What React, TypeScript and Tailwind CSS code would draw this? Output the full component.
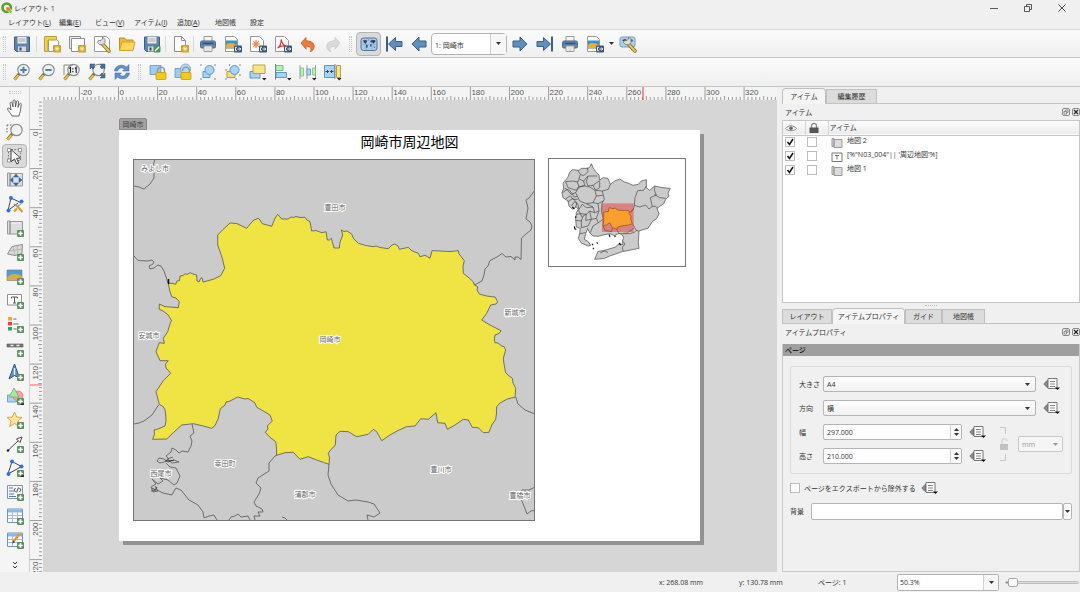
import React from 'react';

type IconProps = { children: React.ReactNode; className?: string };

const Svg = ({ children, className = 'h-[18px] w-[18px]' }: IconProps) => (
  <svg viewBox="0 0 18 18" className={className} fill="none" aria-hidden="true">
    {children}
  </svg>
);

const PlusBadge = () => (
  <g>
    <rect x="11" y="11" width="7" height="7" rx="1" fill="#5a8f5f" />
    <path d="M14.5 12.2v4.6M12.2 14.5h4.6" stroke="#fff" strokeWidth="1.6" />
  </g>
);

const StarBadge = () => (
  <g>
    <rect x="10" y="10" width="8" height="7.500" rx="1" fill="#c9a42f" />
    <path d="M14 11.300v5M11.500 13.800h5M12.300 12.100l3.400 3.400M15.700 12.100l-3.400 3.400" stroke="#fff3b0" strokeWidth=".9" />
  </g>
);

const ExportBadge = () => (
  <g>
    <rect x="10" y="10.500" width="8" height="7" rx="1" fill="#3d566e" />
    <path d="M13 12.300h-1.500v3.400H13M13.500 14h3M15.300 12.500l1.500 1.500-1.500 1.500" stroke="#fff" strokeWidth=".9" />
  </g>
);

const Sheet = () => <path d="M3.500 1.500h7l4 4v11h-11zM10.500 1.500v4h4" fill="#fdfdfd" stroke="#8d8d8d" />;

const Floppy = () => (
  <g>
    <path d="M1.500 2h15v14.500h-13l-2-2z" fill="#5c85ad" stroke="#3f5f80" />
    <path d="M4.500 2h9v6.500h-9z" fill="#ececec" />
    <path d="M5.500 4h7M5.500 6h7" stroke="#a9a9a9" />
    <path d="M5 11.500h8v5H5z" fill="#d8d8d8" />
    <path d="M6.500 12.500h2v3h-2z" fill="#334c66" />
  </g>
);

const Printer = () => (
  <g>
    <path d="M5 1.500h8v5H5z" fill="#f5f5f5" stroke="#9a9a9a" />
    <rect x="1.500" y="6" width="15" height="7" rx="1.500" fill="#5f87b0" stroke="#46688c" />
    <path d="M3.500 8.500h11" stroke="#34506d" strokeWidth="1.500" />
    <path d="M5 11h8v5.500H5z" fill="#fafafa" stroke="#9a9a9a" />
    <path d="M6.500 13h5M6.500 15h5" stroke="#bbb" strokeWidth=".8" />
  </g>
);

const ImageSheet = () => (
  <g>
    <path d="M1.500 1.500h9l3 3v12h-12z" fill="#fdfdfd" stroke="#999" />
    <path d="M2 5.500h11v8H2z" fill="#3d8fd1" />
    <path d="M2 10c3-3 7-2 11 0v3.500H2z" fill="#dfb043" />
    <ExportBadge />
  </g>
);

const Lens = () => (
  <g>
    <path d="M6.500 10.500l-5 6" stroke="#6b5a2a" strokeWidth="3" />
    <path d="M5.500 12l-4 4.500" stroke="#eec13e" strokeWidth="2" />
    <circle cx="10.500" cy="7" r="5.700" fill="#f0f3f5" stroke="#8c9093" strokeWidth="1.200" />
  </g>
);

const Wrench = () => (
  <g>
    <path d="M9.500 9l6.500 7" stroke="#6d5d22" strokeWidth="3.400" strokeLinecap="round" />
    <path d="M10 9.500l6 6.500" stroke="#f0cd48" strokeWidth="2" strokeLinecap="round" />
    <path d="M5.500 5.500l2.500 0 1.500-1.500 0-2 2.500 2.500 0 3-2.500 2.500-3-.500-2-2z" fill="#ddd" stroke="#666" strokeWidth=".7" />
  </g>
);

const World = () => (
  <g>
    <rect x="1" y="3" width="16" height="12.500" rx="2.500" fill="#a9c9ea" stroke="#4b76a5" />
    <path
      d="M3 5.500l2.500-.5 2 .8-1.200 1.700-.8 1.500-1.500-1.500zM6 9.500l1.800 1-.8 3-1-1.500zM8 5l1.200-.5v1zM10.300 6l1.500-1 3 .3 1 1-1.300 1-.5 1.500-1.200-.8-.6-.8-1.500.3zM10 9l1.800.3-.6 2.700-.9-1zM13.500 11.500l1.500.3-.5 1.200z"
      fill="#28394b"
    />
    <path d="M1 9.500h16M6 3v12M12 3v12" stroke="#6f9ac7" strokeWidth=".4" />
  </g>
);

const ArrowShape = ({ d }: { d: string }) => <path d={d} fill="#5f8fc1" stroke="#3b5f86" strokeLinejoin="round" />;
const leftArrow = 'M2 9l7-7v4h7v6H9v4z';
const rightArrow = 'M16 9L9 2v4H2v6h7v4z';

const Corner = () => <path d="M13 15h4.500l-2.250 2.500z" fill="#222" />;

const MapSheet = () => (
  <g>
    <path d="M1.500 2h2.500v13H1.500zM4 2.500h12.500V15H4z" fill="#dedede" stroke="#8f8f8f" strokeWidth=".9" />
    <path d="M5.500 4h9.500" stroke="#f2f2f2" />
  </g>
);

const icons: Record<string, React.ReactNode> = {
  save: <Floppy />,
  newLayout: (
    <g>
      <path d="M5.500 3.500h7l3 3v10h-10z" fill="#fdfdfd" stroke="#999" />
      <path d="M1.500 1.500h12V5H5v11.500H1.500z" fill="#f1cf5b" stroke="#c29d34" />
      <StarBadge />
    </g>
  ),
  duplicate: (
    <g>
      <path d="M1.500 1.500h11v12h-11z" fill="#ededed" stroke="#8d8d8d" />
      <path d="M3.500 3.500h13v13h-13z" fill="#fdfdfd" stroke="#8d8d8d" />
      <StarBadge />
    </g>
  ),
  manager: (
    <g>
      <path d="M1.500 1.500h12l3 3v12h-15z" fill="#fdfdfd" stroke="#999" />
      <Wrench />
    </g>
  ),
  open: (
    <g>
      <path d="M1.500 15V3h5l1.500 2h7v3" fill="#e9b93b" stroke="#c08f1e" />
      <path d="M1.500 15.500L4 7h13l-2 8.500z" fill="#fbd55e" stroke="#d3a22c" />
    </g>
  ),
  saveAs: (
    <g>
      <Floppy />
      <rect x="10.500" y="10.500" width="7" height="7" rx="1.500" fill="#4d9455" />
      <path d="M12 16l4-4" stroke="#fff" strokeWidth="1.400" />
    </g>
  ),
  addPage: (
    <g>
      <Sheet />
      <StarBadge />
    </g>
  ),
  print: <Printer />,
  image: <ImageSheet />,
  svg: (
    <g>
      <path d="M1.500 1.500h9l4 4v11h-13z" fill="#fdfdfd" stroke="#999" />
      <path d="M7 5v8M3 9h8M4.200 6.200l5.600 5.600M9.800 6.200l-5.600 5.600" stroke="#ef8246" strokeWidth="1.200" />
      <ExportBadge />
    </g>
  ),
  pdf: (
    <g>
      <path d="M1.500 1.500h9l4 4v11h-13z" fill="#fdfdfd" stroke="#999" />
      <path d="M3.500 13c3-2 4-5 3.500-8.500 1 4 2.500 6 5 6.500-3-.500-6 .2-8.500 2z" stroke="#dd3b35" strokeWidth="1.200" />
      <ExportBadge />
    </g>
  ),
  undo: <path d="M2 8l5-5.500v3.300c6 0 9 3 8 7-.5 2-2 3.200-4 4 2-3 1-5.600-4-5.600v3z" fill="#ee7b3b" stroke="#cc5a1e" strokeWidth=".8" />,
  redo: <path d="M16 8l-5-5.500v3.300c-6 0-9 3-8 7 .5 2 2 3.200 4 4-2-3-1-5.600 4-5.600v3z" fill="#dadada" stroke="#c9c9c9" strokeWidth=".8" />,
  world: <World />,
  first: (
    <g>
      <path d="M2 1.500v15" stroke="#3b5f86" strokeWidth="2" />
      <ArrowShape d="M3.500 9l7-6.500v4H17v5h-6.500v4z" />
    </g>
  ),
  prev: <ArrowShape d={leftArrow} />,
  next: <ArrowShape d={rightArrow} />,
  last: (
    <g>
      <path d="M16 1.500v15" stroke="#3b5f86" strokeWidth="2" />
      <ArrowShape d="M14.500 9l-7-6.500v4H1v5h6.500v4z" />
    </g>
  ),
  atlasSettings: (
    <g>
      <rect x="1" y="2" width="15" height="10" rx="2" fill="#b4cfea" stroke="#7a9cc0" />
      <path d="M3 5l3-1 2 1-1.500 3zM11 4l3 1-1 2z" fill="#33485f" />
      <Wrench />
    </g>
  ),
  zoomIn: (
    <g>
      <Lens />
      <path d="M10.500 3.800v6.400M7.300 7h6.400" stroke="#4f80b5" strokeWidth="2" />
    </g>
  ),
  zoomOut: (
    <g>
      <Lens />
      <path d="M7.300 7h6.400" stroke="#4f80b5" strokeWidth="2" />
    </g>
  ),
  zoomActual: (
    <g>
      <Lens />
      <path d="M1 2h9M1 2v10" stroke="#888" />
      <path d="M6.300 5.500l1.200-1v5.500M12 5.500l1.200-1v5.500" stroke="#222" strokeWidth="1.100" />
      <path d="M9.800 5.300v1.200M9.800 8v1.200" stroke="#222" strokeWidth="1.200" />
    </g>
  ),
  zoomFull: (
    <g>
      <Lens />
      <path
        d="M2 1h5L5.500 2.500 7 4 5 6 3.500 4.500 2 6zM17 1h-5l1.500 1.500L12 4l2 2 1.500-1.500L17 6zM17 15h-5l1.500-1.500L12 12l2-2 1.500 1.500L17 10z"
        fill="#45719f"
        stroke="#2f547a"
        strokeWidth=".5"
      />
    </g>
  ),
  refresh: (
    <g fill="#5e93c9" stroke="#39689b" strokeWidth=".5">
      <path d="M1.500 8C2 2 9.500.500 13.500 4L16 1.500V8H9.500L11.500 6C8.500 4 5.500 5 4.700 8z" />
      <path d="M16.500 10c-.5 6-8 7.500-12 4L2 16.500V10h6.500l-2 2c3 2 6 1 6.800-2z" />
    </g>
  ),
  lock: (
    <g>
      <path d="M1 2.500h11v9H1z" fill="#9ecbee" stroke="#5f96c3" strokeWidth=".8" />
      <path d="M8.500 10V8c0-5 7-5 7 0v2" stroke="#9a9a9a" strokeWidth="1.600" />
      <rect x="7" y="9.500" width="10" height="7" rx="1" fill="#f4cb14" stroke="#bf9c15" strokeWidth=".8" />
    </g>
  ),
  unlock: (
    <g>
      <path d="M1 5.500h11v9H1z" fill="#9ecbee" stroke="#5f96c3" strokeWidth=".8" />
      <circle cx="11.500" cy="6" r="5" fill="#b6d9f5" stroke="#6ea2cc" strokeWidth=".8" />
      <path d="M8.500 8c0-5 7-5 7 0v2" stroke="#9a9a9a" strokeWidth="1.500" />
      <rect x="7" y="9.500" width="10" height="7" rx="1" fill="#f4cb14" stroke="#bf9c15" strokeWidth=".8" />
    </g>
  ),
  group: (
    <g>
      <path d="M4 8.500h7v6H4z" fill="#a9d4f5" stroke="#5f96c3" />
      <circle cx="10.500" cy="7" r="4.500" fill="#a9d4f5" stroke="#5f96c3" />
      <path d="M1.500 2h1M15.500 2h1M1.500 16h1M15.500 16h1" stroke="#222" strokeWidth="1.200" />
    </g>
  ),
  ungroup: (
    <g>
      <path d="M3 8.500h8v6H3z" fill="#f5e07a" stroke="#b99e32" />
      <circle cx="10.500" cy="7" r="4.500" fill="#a9d4f5" stroke="#5f96c3" />
      <path d="M1.500 7h1M5 2h1M15.500 2h1M1.500 16h1M11.500 16h1M15.500 12h1" stroke="#222" strokeWidth="1.200" />
    </g>
  ),
  raise: (
    <g>
      <path d="M1 8.500h10v6.500H1z" fill="#a9d4f5" stroke="#5f96c3" />
      <path d="M4 2h12v8.500H4z" fill="#f5e68c" stroke="#b5a34a" />
      <Corner />
    </g>
  ),
  align: (
    <g>
      <path d="M1.500 1v15.500" stroke="#777" />
      <path d="M2 2.500h7v5H2z" fill="#b9efb9" stroke="#7cbf7c" />
      <path d="M2 9.500h10.500v5H2z" fill="#a9d4f5" stroke="#5f96c3" />
      <Corner />
    </g>
  ),
  distribute: (
    <g>
      <path d="M1 2v14M8 2v14M16.500 2v14" stroke="#888" strokeWidth=".8" />
      <path d="M1.500 5h3v8h-3zM13.500 5h3v7h-3z" fill="#b9efb9" stroke="#7cbf7c" strokeWidth=".8" />
      <path d="M8 6h3.500v6H8z" fill="#a9d4f5" stroke="#5f96c3" strokeWidth=".8" />
      <Corner />
    </g>
  ),
  resize: (
    <g>
      <path d="M.5 2.500h10v12H.5z" fill="#a9d4f5" stroke="#5f96c3" />
      <path d="M11 1v15" stroke="#888" />
      <path d="M12.500 2.500h4v12h-4z" fill="#f5e68c" stroke="#b5a34a" />
      <path d="M1.500 8.500h3M3 7l1.500 1.500L3 10M9.500 8.500h-3M8 7L6.500 8.500 8 10" stroke="#333" strokeWidth=".9" />
      <Corner />
    </g>
  ),
  pan: (
    <path
      d="M6 17c-1-3-4.500-5-4.500-7.500C2.500 8.500 4 9.500 5 11L4 4c.5-1.500 2-1 2.200.3L7 8V2c.5-1.500 2-1.500 2.200 0L9.500 8l1-5.500c.6-1.200 2-.8 2 .5L12 8.500l1.500-3.700c.8-1 2-.4 1.700.8C14.500 9 15 12 13.500 14.500L13 17z"
      fill="#fff"
      stroke="#555"
      strokeWidth=".9"
    />
  ),
  zoomArea: (
    <g>
      <path d="M1 2h9M1 2v9" stroke="#666" strokeDasharray="1.500 1.500" />
      <Lens />
    </g>
  ),
  select: (
    <g>
      <path d="M2.500 2.500h12v11h-12z" stroke="#777" strokeDasharray="1.500 1.500" />
      <path d="M1.500 1.500h3v3h-3zM12.500 1.500h3v3h-3zM1.500 12h3v3h-3z" fill="#fff" stroke="#777" strokeWidth=".7" />
      <path d="M5 2.500l9.500 8.500-4 .300 2.300 4.700-2 1-2.300-5L5 14.700z" fill="#fff" stroke="#333" strokeWidth=".9" />
    </g>
  ),
  moveContent: (
    <g>
      <MapSheet />
      <path d="M10 3l2.500 3h-5zM10 15l2.500-3h-5zM4 9l3-2.500v5zM16 9l-3-2.500v5z" fill="#2f67a5" stroke="#2f67a5" strokeWidth=".5" />
    </g>
  ),
  editNodes: (
    <g>
      <path d="M5 3l9.500 4.500M5 3L2 15.500M2 15.500L12 8" stroke="#444" />
      <circle cx="5" cy="3" r="2" fill="#2f6fe0" />
      <circle cx="15.500" cy="6.500" r="2" fill="#2f6fe0" />
      <circle cx="2.500" cy="15.500" r="2" fill="#2f6fe0" />
      <path d="M8 16.500l3-3M11 11l5.500 6" stroke="#dd9d23" strokeWidth="2.200" />
      <path d="M8 9l3 2.500 4-2.500" stroke="#999" strokeWidth="1.400" />
    </g>
  ),
  addMap: (
    <g>
      <MapSheet />
      <PlusBadge />
    </g>
  ),
  add3d: (
    <g>
      <path d="M1.500 11L6 3.500l10.500-2-.500 9-7 2z" fill="#d9d9d9" stroke="#8b8b8b" />
      <path d="M4 8l12-2M7 4l2 8M11 3l1 8" stroke="#aaa" strokeWidth=".7" />
      <PlusBadge />
    </g>
  ),
  addPicture: (
    <g>
      <path d="M1 3h15v10.500H1z" fill="#4b9ddb" stroke="#777" strokeWidth=".6" />
      <path d="M1.300 10c4-3.500 8-4 14.500-1v4.300H1.300z" fill="#d9ac45" />
      <PlusBadge />
    </g>
  ),
  addLabel: (
    <g>
      <path d="M1.500 3.500h14v10.500h-14z" fill="#fdfdfd" stroke="#8f8f8f" />
      <path d="M5.500 6h6M8.500 6v6M7 12h3M5.500 6v1.500M11.500 6v1.500" stroke="#555" />
      <PlusBadge />
    </g>
  ),
  addLegend: (
    <g>
      <path d="M2 2h4v3.500H2z" fill="#f2a53a" />
      <path d="M2 7h4v3.500H2z" fill="#e0453d" />
      <path d="M2 12h4v3.500H2z" fill="#33a35c" />
      <path d="M7.500 4h3M7.500 9h5M7.500 14h3" stroke="#666" />
      <PlusBadge />
    </g>
  ),
  addScale: (
    <g>
      <path d="M1 5h16v3H1z" fill="#777" stroke="#555" strokeWidth=".6" />
      <path d="M4.500 6.500h3M10.500 6.500h3" stroke="#eee" strokeWidth="1.400" />
      <PlusBadge />
    </g>
  ),
  addNorth: (
    <g>
      <path d="M8.500 1L3 16l5.500-3.500L13.500 15z" fill="#5f93c6" stroke="#2f5379" />
      <path d="M8.500 5v7" stroke="#dcebf8" strokeWidth="1.500" />
      <PlusBadge />
    </g>
  ),
  addShape: (
    <g>
      <path d="M1.500 8h9v7h-9z" fill="#a9d4f5" stroke="#5f96c3" strokeWidth=".8" />
      <circle cx="12" cy="9" r="5" fill="#f3a3a3" stroke="#d77" strokeWidth=".8" />
      <path d="M8 1l5 9H3z" fill="#a8eaa0" stroke="#68b065" strokeWidth=".8" />
      <PlusBadge />
      <path d="M14.500 16.500h3.500v1.200h-3z" fill="#111" />
    </g>
  ),
  addMarker: (
    <g>
      <path d="M8.500 1l2.200 5 5.300.5-4 3.500 1.300 5.500-4.800-3-4.800 3L5 10 1 6.500 6.300 6z" fill="#fbe3a0" stroke="#d5aa4d" />
      <PlusBadge />
    </g>
  ),
  addArrow: (
    <g>
      <path d="M2 15.500L13 5" stroke="#444" />
      <path d="M16 2l-2 5.500-3.500-3.500z" fill="#fff" stroke="#444" />
      <circle cx="2" cy="15.500" r="1.300" fill="#222" />
      <PlusBadge />
    </g>
  ),
  addNode: (
    <g>
      <path d="M6 2.500L2 15M6 2.500l9.500 5L2 15" stroke="#444" />
      <circle cx="6" cy="2.500" r="2" fill="#2f6fe0" />
      <circle cx="15.500" cy="7.500" r="2" fill="#2f6fe0" />
      <circle cx="2.500" cy="15" r="2" fill="#2f6fe0" />
      <PlusBadge />
      <path d="M14.500 16.500h3.500v1.200h-3z" fill="#111" />
    </g>
  ),
  addHtml: (
    <g>
      <path d="M1.500 2.500h15v13h-15z" fill="#f5f7f9" stroke="#8794a1" />
      <path d="M3 5h4M3 8h5M3 11h5M3 13.500h7" stroke="#4c7fb3" />
      <path d="M9.500 5L8 7l1.500 2M13.500 5L15 7l-1.500 2M12.500 4.500l-2 5" stroke="#333" strokeWidth=".9" />
      <PlusBadge />
    </g>
  ),
  addTable: (
    <g>
      <path d="M1.500 2h15v13.500h-15z" fill="#fdfdfd" stroke="#6f94bb" />
      <path d="M2 2.500h14v3H2z" fill="#8bb8e3" />
      <path d="M2 8.500h14M2 11.500h14M6.500 5v10M11.500 5v10" stroke="#a9bed3" />
      <PlusBadge />
    </g>
  ),
  addFixed: (
    <g>
      <path d="M1.500 2h15v13.500h-15z" fill="#fdfdfd" stroke="#6f94bb" />
      <path d="M2 2.500h14v3H2z" fill="#8bb8e3" />
      <path d="M2 8.500h14M2 11.500h14M6.500 5v10" stroke="#a9bed3" />
      <path d="M14 2.500L7 11" stroke="#e09a3c" strokeWidth="2.600" />
      <path d="M7.500 9.500L6 12.500l2.800-1.300z" fill="#333" />
      <PlusBadge />
    </g>
  ),
};

const ToolButton = ({ name, label, pressed = false }: { name: string; label: string; pressed?: boolean }) => (
  <button
    type="button"
    aria-label={label}
    className={
      pressed
        ? 'flex h-6 w-[25px] shrink-0 items-center justify-center rounded-sm border border-[#b4b4b4] bg-[#dadada]'
        : 'flex h-6 w-[25px] shrink-0 items-center justify-center'
    }
  >
    <Svg>{icons[name]}</Svg>
  </button>
);

const Grip = ({ className = 'mx-[3px]' }: { className?: string }) => (
  <span className={`${className} h-4 w-[3px] shrink-0 border-x border-dotted border-[#c4c4c4]`} />
);
const Sep = ({ className = 'mx-[2px]' }: { className?: string }) => (
  <span className={`${className} h-4 w-px shrink-0 bg-[#d8d8d8]`} />
);

const Caret = () => (
  <svg viewBox="0 0 5 3" className="h-[3px] w-[5px]" aria-hidden="true">
    <path d="M0 0h5L2.500 3z" fill="currentColor" />
  </svg>
);

const menus = [
  { text: 'レイアウト', key: 'L', width: 'w-[51px]' },
  { text: '編集', key: 'E', width: 'w-9' },
  { text: 'ビュー', key: 'V', width: 'w-[39px]' },
  { text: 'アイテム', key: 'I', width: 'w-[43px]' },
  { text: '追加', key: 'A', width: 'w-[38px]' },
  { text: '地図帳', key: '', width: 'w-[35px]' },
  { text: '設定', key: '', width: 'w-6' },
];

const TitleBar = () => (
  <header className="flex h-4 items-center pr-[14px] pl-px">
    <svg viewBox="0 0 18 18" className="h-3 w-3" aria-hidden="true">
      <circle cx="8.500" cy="8.500" r="6.200" fill="none" stroke="#5c9e31" strokeWidth="4" />
      <path d="M8 8h4l5.500 6.500-3 3L8 11.500z" fill="#8cc63f" stroke="#fff" strokeWidth=".7" />
      <path d="M8 8h3.500l2 2.500-3 2.500L8 11z" fill="#ee7913" />
    </svg>
    <h1 className="ml-px text-[7px]">レイアウト 1</h1>
    <div className="ml-auto flex items-center gap-[26px] text-[#333]">
      <button type="button" aria-label="最小化" className="h-2 w-2">
        <svg viewBox="0 0 8 8"><path d="M0 4.500h8" stroke="currentColor" strokeWidth=".8" /></svg>
      </button>
      <button type="button" aria-label="元に戻す" className="h-2 w-2">
        <svg viewBox="0 0 8 8" fill="none" stroke="currentColor" strokeWidth=".8">
          <path d="M.5 2.500h5v5h-5zM2.500 2.300V.500h5v5H5.700" />
        </svg>
      </button>
      <button type="button" aria-label="閉じる" className="h-2 w-2">
        <svg viewBox="0 0 8 8" stroke="currentColor" strokeWidth=".9"><path d="M.5.500l7 7M7.500.500l-7 7" /></svg>
      </button>
    </div>
  </header>
);

const MenuBar = () => (
  <nav className="flex h-[13px] items-center pl-2 text-[7px]">
    {menus.map((m) => (
      <button key={m.text} type="button" className={`${m.width} text-left whitespace-nowrap`}>
        {m.text}
        {m.key && (
          <>
            (<u>{m.key}</u>)
          </>
        )}
      </button>
    ))}
  </nav>
);

const LayoutToolbar = () => (
  <div className="flex h-[29px] items-center border-y border-t-[#d9d9d9] border-b-[#c6c6c6] bg-linear-to-b from-[#fbfbfb] to-[#efefef]">
    <Grip />
    <ToolButton name="save" label="保存" />
    <Sep />
    <ToolButton name="newLayout" label="新規レイアウト" />
    <ToolButton name="duplicate" label="複製" />
    <ToolButton name="manager" label="レイアウトマネージャ" />
    <ToolButton name="open" label="開く" />
    <ToolButton name="saveAs" label="テンプレートとして保存" />
    <Sep className="mx-px" />
    <ToolButton name="addPage" label="ページを追加" />
    <Sep className="mx-px" />
    <ToolButton name="print" label="印刷" />
    <ToolButton name="image" label="画像出力" />
    <ToolButton name="svg" label="SVG出力" />
    <ToolButton name="pdf" label="PDF出力" />
    <ToolButton name="undo" label="元に戻す" />
    <ToolButton name="redo" label="やり直す" />
    <Grip className="mx-1" />
    <ToolButton name="world" label="地図帳プレビュー" pressed />
    <ToolButton name="first" label="最初" />
    <ToolButton name="prev" label="前" />
    <div className="relative h-[22px] w-[76px] shrink-0 rounded-sm border border-[#b3b3b3] bg-white">
      <select aria-label="地物" className="h-full w-full appearance-none pr-4 pl-[3px] text-[7px] outline-none">
        <option>1: 岡崎市</option>
      </select>
      <span className="pointer-events-none absolute inset-y-0 right-0 flex w-4 items-center justify-center border-l border-[#d0d0d0] bg-[#f6f6f6]">
        <Caret />
      </span>
    </div>
    <ToolButton name="next" label="次" />
    <ToolButton name="last" label="最後" />
    <ToolButton name="print" label="地図帳を印刷" />
    <ToolButton name="image" label="地図帳を画像出力" />
    <button type="button" aria-label="出力メニュー" className="flex h-6 w-2 shrink-0 items-center justify-center">
      <Caret />
    </button>
    <ToolButton name="atlasSettings" label="地図帳設定" />
  </div>
);

const ActionsToolbar = () => (
  <div className="flex h-[29px] items-center border-b border-[#c6c6c6] bg-linear-to-b from-[#fbfbfb] to-[#efefef]">
    <Grip />
    <ToolButton name="zoomIn" label="拡大" />
    <ToolButton name="zoomOut" label="縮小" />
    <ToolButton name="zoomActual" label="100%" />
    <ToolButton name="zoomFull" label="全体表示" />
    <ToolButton name="refresh" label="更新" />
    <Grip className="mx-1" />
    <ToolButton name="lock" label="ロック" />
    <ToolButton name="unlock" label="ロック解除" />
    <ToolButton name="group" label="グループ化" />
    <ToolButton name="ungroup" label="グループ解除" />
    <ToolButton name="raise" label="前面へ" />
    <ToolButton name="align" label="整列" />
    <ToolButton name="distribute" label="分布" />
    <ToolButton name="resize" label="サイズ変更" />
  </div>
);

const toolbox = [
  ['pan', '移動'],
  ['zoomArea', 'ズーム'],
  ['select', '選択'],
  ['moveContent', 'コンテンツ移動'],
  ['editNodes', 'ノード編集'],
  ['addMap', '地図を追加'],
  ['add3d', '3D地図を追加'],
  ['addPicture', '画像を追加'],
  ['addLabel', 'ラベルを追加'],
  ['addLegend', '凡例を追加'],
  ['addScale', 'スケールバーを追加'],
  ['addNorth', '方位記号を追加'],
  ['addShape', 'シェイプを追加'],
  ['addMarker', 'マーカーを追加'],
  ['addArrow', '矢印を追加'],
  ['addNode', 'ノードアイテムを追加'],
  ['addHtml', 'HTMLを追加'],
  ['addTable', '属性テーブルを追加'],
  ['addFixed', '固定テーブルを追加'],
];

const Toolbox = () => (
  <div className="flex w-[30px] shrink-0 flex-col items-center border-r border-[#cfcfcf] bg-[#f5f5f5]">
    <span className="mt-1 mb-[2px] h-[3px] w-3 border-y border-dotted border-[#c4c4c4]" />
    {toolbox.map(([name, label]) => (
      <ToolButton key={name} name={name} label={label} pressed={name === 'select'} />
    ))}
    <button type="button" aria-label="その他" className="mt-2 h-[10px] w-[10px] text-[#333]">
      <svg viewBox="0 0 10 10" fill="none" stroke="currentColor"><path d="M3 2l2 2 2-2M3 6l2 2 2-2" /></svg>
    </button>
  </div>
);

// ruler scale: one millimetre is 1.955 px at the current zoom
const MM = 1.955;
const range = (from: number, to: number, step: number) => {
  const out: number[] = [];
  for (let v = from; v <= to; v += step) out.push(v);
  return out;
};

const HorizontalRuler = () => {
  const x = (mm: number) => 88.5 + mm * MM;
  return (
    <svg className="block h-[13px] w-full bg-[#f4f4f4] font-['Liberation_Sans',sans-serif]" aria-hidden="true">
      {range(-38, 336, 2).map((mm) => (
        <path
          key={mm}
          d={`M${x(mm)} ${mm % 20 === 0 ? 0 : mm % 10 === 0 ? 9 : 10}V13`}
          stroke="#888"
          strokeWidth=".8"
        />
      ))}
      {range(-20, 320, 20).map((mm) => (
        <text key={mm} x={x(mm) + 1} y="8" fontSize="8" fill="#555">
          {mm}
        </text>
      ))}
      <path d="M613 0V13" stroke="#e33" />
    </svg>
  );
};

const VerticalRuler = () => {
  const y = (mm: number) => 29.5 + mm * MM;
  return (
    <svg className="h-full w-[13px] shrink-0 bg-[#f4f4f4] font-['Liberation_Sans',sans-serif]" aria-hidden="true">
      {range(-14, 226, 2).map((mm) => (
        <path
          key={mm}
          d={`M${mm % 20 === 0 ? 0 : mm % 10 === 0 ? 8 : 9} ${y(mm)}H12`}
          stroke="#888"
          strokeWidth=".8"
        />
      ))}
      {range(0, 220, 20).map((mm) => (
        <text key={mm} transform={`translate(8 ${y(mm) + 2}) rotate(-90)`} textAnchor="end" fontSize="8" fill="#555">
          {mm}
        </text>
      ))}
      <path d="M0 285H12" stroke="#e66" />
    </svg>
  );
};

const cityOutline = `168.3,283.3 172,283.3 175.7,284.300 177,281 179.5,280.500 180,276 183,275.500 185,273.700 187,274.500 190,272.700 193,274 196.700,275 197,281 199,282 200.700,278.300 202,277.700 203,282 205,281.500 213.300,279.300 220.700,275.700 224.700,268.300 222.300,258.300 219.500,250 217.700,245 217.700,235 223,229.500 230,223 236.700,223.500 246.700,228.300 251,223 254,220 258.300,218.300 260,220 262.300,223.700 271.700,226.300 275,218.300 277.700,214.300 281.700,219 288.300,219 291,217 293.300,217.500 296,216.500 300,217.500 305,217.300 307,220 310,221.700 311.700,231 316,230.500 321.700,232.700 326,231.700 327.300,240 329.500,240 331.300,238.300 334,248 339.300,248 340,242 342.700,235 341.300,230 344,231.500 347,231 351.700,234 353.300,238.300 358.300,243.300 366.700,245.700 373.300,246.700 376,246 380,247.500 388.300,248.700 392,245 395,244 398,246 399.300,249.300 403,248.500 408.300,247.300 411.700,250.700 418.300,253.300 420,256.700 425,255.300 430,258.300 432,250.700 440,251 450,251.500 458.300,250.700 459,254 460.700,256 464.300,260.700 463,266 463.300,273.300 468,277 473.300,281.700 474.300,285 477.700,286.700 477,290 479.300,294 486.700,296 495,297 497.700,301.700 496,304 490.700,305 486.700,313.300 481.700,320 490,325 501,330.700 499,333.500 495,335 494.300,340 495,342.700 498,343 501.700,346 504,346.500 505.700,350 503.300,358.300 504,364 505.700,372.700 509,376 512.300,378.300 513,383 515.700,388.300 515,397.300 511,398 506.700,399.300 500,403 496.700,406.700 496.500,413 495.700,419.300 491.700,425 489,432.300 483.300,432.700 478.300,427.700 472.300,427.300 468.300,420 463.300,419.300 455,425 447.300,429.300 445,423.300 437.700,422.700 436,412.700 428.300,419.300 420.700,418.700 415,426 406.700,426.700 398,430.500 390,435 381.700,440.700 376.700,431.700 373.300,429.300 368.300,434.300 356.700,436.700 348.300,431.700 340,431.300 336,435 335.300,445 330,450.700 328.300,453.300 329.500,458 329,464.300 323.300,462.300 316.700,460 308.300,456.700 300,459.300 293.300,452.300 285,452.700 276.700,455.300 276.500,448 275.700,441.700 270,437.300 265.300,432.300 268,429 267.300,426 272.300,421 270,415 261.700,410 256.700,407.300 255,403 250.700,400 248,398.500 245,399 237.700,397 230,401 226,402 225,405 221,408 220,410 218.300,418.300 215,425.500 211.700,428.300 203.300,426 193.300,423.700 181.700,425 173.300,432.700 166.700,439 152.700,439.300 154.500,434 154,430 158,429 165,426 166,421 165.700,415 165,410 163.300,406.700 159.300,404.300 156,391.700 163.300,380.700 170.700,373.300 168,370 166,368.300 165.500,364 168.300,360.700 160,360.700 156,351.700 159.300,342.700 164.300,343.300 163.300,338.300 167.700,331.700 170.700,321.700 171.700,321 168.300,315 163,311 159.300,309.300 159.300,304 165,306.700 170,307 178.300,307.700 179.300,301.700 176,298 171.700,296.700 169.500,290`;

const borders = [
  '155,159 153,166 154,172 154,178 150,184 144,189 139,187 134,186',
  '134,256 138,260.5 148,261 152,260 154,262 153,264 149,266 150,269 154,268 158,265 161,266 164,271 166,277 168,283',
  '134,424 139,423 144,421 152,415 158.500,405',
  '192,424 194,433 190,436 192,441 191,446 188,452 182,451 179,453 176,450 172,448 171,452 166,456 169,459 164,462 160,463 157,461 159,458 164,459 168,462 174,460 179,462 172,463 167,459 173,457',
  '166,463 170,467 176,468 180,476 177,483 174,485 168,480 160,478 163,481 158,484 152,479 156,484 151,487 153,492 158,491 155,486',
  '151,491 157,490 163,493 172,495 174,491 176,488 181,490 189,500 198,505 203,512 204,518 209,516 214,515 217,520',
  '229,520 231,517 235,516 238,514 241,517 248,516 250,520',
  '255,520 254,516 260,516 258,512 263,512 262,509 256,506 254,502 259,494 261,488 256,483 258,478 269,471 269,463 275,456 277,455',
  '329,464 328,475 331,484 338,495 348,501 356,500 368,502 374,504 380,513 374,517 367,515 368,520',
  '515.700,397 518,404 525,410 535,414',
  '474.300,285 482,281 484,275 485,269 488,266 490,260.500 497,257 502,253.500 506,257 511,256.500 515,260 515,257 518,257 521,259.500 521.500,238 526,234 531,230 532,226 530,222 526,219 528,208 526,200 529,198 535,190',
  '535,487 529,490 522,490 520,496 527,514 531,511 535,510',
  '282,517 285,518 287,520',
];

const cityLabels = [
  { text: 'みよし市', x: 155, y: 171 },
  { text: '豊田市', x: 335, y: 210 },
  { text: '新城市', x: 515, y: 315 },
  { text: '安城市', x: 149, y: 338 },
  { text: '岡崎市', x: 330, y: 342 },
  { text: '西尾市', x: 161, y: 476 },
  { text: '幸田町', x: 225, y: 466 },
  { text: '蒲郡市', x: 305, y: 497 },
  { text: '豊川市', x: 441, y: 472 },
  { text: '豊橋市', x: 520, y: 498 },
];

const MainMap = () => (
  <svg viewBox="134 160 400 360" className="absolute top-[29px] left-[14px] h-[362px] w-[402px] border border-[#777] bg-[#cbcbcb]">
    <g stroke="#555" strokeWidth=".8" strokeLinejoin="round" fill="none">
      {borders.map((points) => (
        <polyline key={points} points={points} />
      ))}
      <polygon points={cityOutline} fill="#efe443" />
      <path d="M168.500 279v5" stroke="#111" strokeWidth="1.500" />
      <path d="M152 488l3 2 2-3M165 461l4 0 5-1" stroke="#222" />
    </g>
    <g fontSize="7" fill="#666" stroke="#fff" strokeWidth="2" strokeLinejoin="round" textAnchor="middle" paintOrder="stroke">
      {cityLabels.map((l) => (
        <text key={l.text} x={l.x} y={l.y}>
          {l.text}
        </text>
      ))}
    </g>
  </svg>
);

const prefecture =
  '155,238 152,246 145,252 125,252 118,258 98,256 90,264 84,280 70,296 72,312 67,325 70,340 85,350 88,365 98,374 110,368 116,375 110,385 108,405 110,428 122,432 120,448 116,462 125,476 145,485 153,483 146,472 134,465 138,448 144,433 150,445 160,455 175,456 190,452 210,448 225,454 238,447 248,452 252,460 248,470 250,480 235,480 228,488 205,495 190,499 175,501 165,525 195,522 210,515 248,502 298,492 296,475 298,440 310,436 325,432 338,412 352,402 358,388 352,372 372,358 378,345 388,336 385,326 392,312 370,310 345,305 330,318 320,310 320,286 305,290 296,300 280,303 265,296 255,293 240,284 225,290 212,300 205,282 190,280 180,288 178,272 168,262 160,250';

const insetBorders = [
  '78,292 100,290 115,293 122,270 114,258',
  '78,292 85,310 110,318 118,305 112,293',
  '122,270 132,274 145,262 143,250',
  '120,285 132,290 145,275 172,275',
  '132,290 135,303 118,308',
  '145,275 140,292 145,305 160,303 178,290',
  '160,303 168,318 180,310 180,290',
  '108,325 118,308 135,305 150,308 166,318 170,335 160,355 140,358 120,350 108,325',
  '68,325 82,316 95,330 108,325',
  '75,312 90,318 104,338 112,336',
  '78,344 92,334 100,345 114,345',
  '85,352 100,342 112,356 108,368',
  '95,365 105,352 115,360 118,375',
  '168,318 188,320 206,315 212,300',
  '188,320 194,345 187,357 185,380 190,400',
  '170,335 190,333',
  '160,355 175,358 190,350',
  '175,358 178,380 165,385 160,368 140,358',
  '118,375 128,360 140,370 160,368',
  '116,376 122,388 140,390 150,380 165,385',
  '108,408 125,410 130,395 140,390',
  '125,410 125,430 145,425 155,405 150,380',
  '110,390 122,388 128,400',
  '155,405 170,402 178,380',
  '170,402 176,415 160,425 152,445',
  '176,415 190,405',
  '140,390 138,408 155,405',
  '120,448 138,445',
  '294,319 286,340 284,363 300,368 318,362 328,374 338,366 334,350 332,340 350,332 344,318 346,306',
  '294,319 312,318 320,305',
  '344,330 360,340 378,342',
  '338,366 348,366 354,372',
  '284,363 280,378 272,384',
  '278,418 285,430 290,438 298,440',
  '248,470 256,478 248,490 250,500',
  '250,448 270,448 284,444 290,438',
  '182,505 195,500 205,504',
];

const InsetMap = () => (
  <svg viewBox="28 224 408 321" className="absolute top-[28px] left-[429px] h-[109px] w-[138px] border border-[#777] bg-white">
    <g stroke="#444" strokeWidth="2" strokeLinejoin="round" fill="none">
      <polygon fill="#cbcbcb" points={prefecture} />
      {insetBorders.map((points) => (
        <polyline key={points} points={points} />
      ))}
      <path d="M160 479l-3 3M171 474l3 4M161 490l0 5M104 426l2 8 4 1M108 396l0 4M98 368l6 6 M208 450l3 8M225 454l2 4M238 476l6 6" stroke="#111" strokeWidth="3.500" />
    </g>
    <path d="M187 357h95v86h-95z" fill="#e8393c" fillOpacity=".5" />
    <g stroke="#8a4a20" strokeWidth="2" strokeLinejoin="round" fill="none">
      <polygon
        fill="#f9a02c"
        points="192,384 200,382 206,382 208,370 220,373 226,371 236,378 262,378 270,382 268,388 274,396 273,404 278,418 268,422 250,424 234,428 232,435 218,430 210,415 200,422 190,424 192,408"
      />
      <polyline points="190,424 196,438 205,440 216,442 218,430" />
      <polyline points="232,435 238,448 262,446 282,432" />
      <polyline points="272,384 282,372" />
    </g>
  </svg>
);

const Canvas = () => (
  <main className="min-w-0 flex-1 overflow-hidden bg-[#d6d6d6] pt-[18px] pl-[76px]">
    <span className="flex h-3 w-7 items-center justify-center rounded-t-xs border border-[#8a8a8a] bg-[#a2a2a2] text-[7px] whitespace-nowrap text-[#444]">
      岡崎市
    </span>
    <div className="relative h-[411px] w-[581px] bg-white shadow-[4px_4px_0_#929292]">
      <h2 className="pt-[3px] text-center text-[14px] leading-[18px] text-black">岡崎市周辺地図</h2>
      <MainMap />
      <InsetMap />
    </div>
  </main>
);

const PanelTitle = ({ children }: { children: React.ReactNode }) => (
  <div className="flex h-4 items-center gap-[2px] pl-[3px] text-[7px]">
    <h3 className="mr-auto">{children}</h3>
    <button type="button" aria-label="フロート" className="h-2 w-2 rounded-xs border border-[#888]">
      <svg viewBox="0 0 6 6" fill="none" stroke="#666" strokeWidth=".7"><path d="M1 2.500h2.500V5H1zM2.500 2V1H5v2.500H4" /></svg>
    </button>
    <button type="button" aria-label="閉じる" className="h-2 w-2 rounded-xs border border-[#888]">
      <svg viewBox="0 0 6 6" stroke="#222" strokeWidth="1.200"><path d="M1 1l4 4M5 1L1 5" /></svg>
    </button>
  </div>
);

type Tab = { text: string; width: string; active?: boolean };

const Tabs = ({ tabs }: { tabs: Tab[] }) => (
  <div role="tablist" className="flex h-4 items-end border-b border-[#c3c3c3] text-[7px]">
    {tabs.map((t) => (
      <button
        key={t.text}
        type="button"
        role="tab"
        aria-selected={!!t.active}
        className={`${t.width} whitespace-nowrap border border-b-0 border-[#c0c0c0] ${
          t.active ? '-mb-px h-4 rounded-t-sm bg-[#f5f5f5]' : 'h-[14px] bg-[#dcdcdc]'
        }`}
      >
        {t.text}
      </button>
    ))}
  </div>
);

const CheckBox = ({ label, id, checked = false }: { label?: string; id?: string; checked?: boolean }) => (
  <span className="relative block h-[10px] w-[10px] shrink-0">
    <input
      type="checkbox"
      id={id}
      aria-label={label}
      defaultChecked={checked}
      className="peer block h-[10px] w-[10px] appearance-none border border-[#bcbcbc] bg-white"
    />
    <svg viewBox="0 0 10 10" className="pointer-events-none absolute inset-0 hidden peer-checked:block" fill="none">
      <path d="M2.500 5l2 2.500L8 2" stroke="#111" strokeWidth="1.500" />
    </svg>
  </span>
);

const items = [
  { name: '地図 2', kind: 'map' },
  { name: '[%"N03_004"|| \'周辺地図\'%]', kind: 'label' },
  { name: '地図 1', kind: 'map' },
];

const ItemsPanel = () => (
  <section className="flex h-[216px] flex-col pt-px">
    <Tabs
      tabs={[
        { text: 'アイテム', width: 'w-11', active: true },
        { text: '編集履歴', width: 'w-[51px]' },
      ]}
    />
    <PanelTitle>アイテム</PanelTitle>
    <div className="flex-1 border border-[#c6c6c6] bg-white">
      <table className="w-full table-fixed border-collapse text-[7px]">
        <thead>
          <tr className="h-[14px] border-b border-[#c6c6c6] bg-linear-to-b from-[#fcfcfc] to-[#ececec]">
            <th className="w-[22px] border-r border-[#d6d6d6] p-0">
              <svg viewBox="0 0 12 8" className="ml-[2px] h-2 w-3" fill="none" role="img" aria-label="表示">
                <path d="M.5 4.500C3 1 9 1 11.500 4.500 9 7.500 3 7.500.5 4.500z" stroke="#888" />
                <circle cx="6" cy="4.300" r="1.800" fill="#666" />
              </svg>
            </th>
            <th className="w-[23px] border-r border-[#d6d6d6] p-0">
              <svg viewBox="0 0 10 12" className="ml-[3px] h-3 w-[10px]" fill="none" role="img" aria-label="ロック">
                <path d="M2.500 6V4c0-3.500 5-3.500 5 0v2" stroke="#888" strokeWidth="1.200" />
                <path d="M.5 5.500h9v5.500h-9z" fill="#555" />
              </svg>
            </th>
            <th className="p-0 pl-px text-left font-normal">アイテム</th>
          </tr>
        </thead>
        <tbody>
          {items.map((item) => (
            <tr key={item.name} className="h-[14px]">
              <td className="p-0 pl-[2px]">
                <CheckBox label={`${item.name} 表示`} checked />
              </td>
              <td className="p-0 pl-[2px]">
                <CheckBox label={`${item.name} ロック`} />
              </td>
              <td className="p-0">
                <div className="flex items-start gap-1 pl-[3px] leading-[10px]">
                  <svg viewBox="0 0 12 10" className="mt-[2px] h-[10px] w-3" fill="none" aria-hidden="true">
                    {item.kind === 'map' ? (
                      <path d="M1 .5h2v8H1zM3 1.500h8v8H3z" fill="#dcdcdc" stroke="#999" />
                    ) : (
                      <path d="M1 1h10v8.500H1zM4 3.500h4M6 3.500v4" fill="#fff" stroke="#777" />
                    )}
                  </svg>
                  <span>{item.name}</span>
                </div>
              </td>
            </tr>
          ))}
        </tbody>
      </table>
    </div>
  </section>
);

const Override = ({ label }: { label: string }) => (
  <button type="button" aria-label={label} className="h-[14px] w-[18px] shrink-0">
    <svg viewBox="0 0 18 14" fill="none">
      <path d="M5 3.500h-1L.8 7 4 10.500h1z" fill="#888" stroke="#666" strokeWidth=".7" />
      <path d="M5 1.500h9v10H5z" fill="#fff" stroke="#777" />
      <path d="M7 4.500h5M7 7h5M7 9.500h5" stroke="#888" />
      <path d="M12 10.500h5l-2.500 2.500z" fill="#111" />
    </svg>
  </button>
);

const SizeSelect = ({ id, value }: { id: string; value: string }) => (
  <div className="relative h-4 min-w-0 flex-1">
    <select
      id={id}
      className="h-full w-full appearance-none rounded-xs border border-[#b5b5b5] bg-linear-to-b from-white to-[#f0f0f0] pl-[3px] text-[7px]"
    >
      <option>{value}</option>
    </select>
    <span className="pointer-events-none absolute inset-y-0 right-[6px] flex items-center">
      <Caret />
    </span>
  </div>
);

const SpinBox = ({ id, value }: { id: string; value: string }) => (
  <div className="flex h-4 w-[139px] overflow-hidden rounded-xs border border-[#b5b5b5] bg-white">
    <input id={id} type="text" defaultValue={value} className="min-w-0 flex-1 pl-[3px] text-[7px] outline-none" />
    <span className="flex w-[11px] flex-col items-center justify-center gap-[2px] border-l border-[#d0d0d0] bg-[#f8f8f8]">
      <button type="button" aria-label="増やす" className="flex rotate-180">
        <Caret />
      </button>
      <button type="button" aria-label="減らす" className="flex">
        <Caret />
      </button>
    </span>
  </div>
);

const PropertiesPanel = () => (
  <section className="flex flex-1 flex-col">
    <Tabs
      tabs={[
        { text: 'レイアウト', width: 'w-[50px]' },
        { text: 'アイテムプロパティ', width: 'w-[73px]', active: true },
        { text: 'ガイド', width: 'w-[37px]' },
        { text: '地図帳', width: 'w-[43px]' },
      ]}
    />
    <PanelTitle>アイテムプロパティ</PanelTitle>
    <div className="mt-1 flex-1 border border-t-0 border-[#c9c9c9] text-[7px]">
      <h4 className="flex h-3 items-center bg-[#9f9f9f] pl-[2px] font-medium text-black">ページ</h4>
      <div className="px-[7px] pt-[10px]">
        <div className="flex h-[108px] flex-col gap-2 rounded-xs border border-[#dadada] px-2 pt-[9px]">
          <div className="flex items-center">
            <label htmlFor="size" className="w-6">大きさ</label>
            <SizeSelect id="size" value="A4" />
            <span className="w-[7px]" />
            <Override label="大きさの上書き" />
            <span className="w-[2px]" />
          </div>
          <div className="flex items-center">
            <label htmlFor="orientation" className="w-6">方向</label>
            <SizeSelect id="orientation" value="横" />
            <span className="w-[7px]" />
            <Override label="方向の上書き" />
            <span className="w-[2px]" />
          </div>
          <div className="flex items-center">
            <div className="flex flex-col gap-2">
              <div className="flex items-center">
                <label htmlFor="width" className="w-6">幅</label>
                <SpinBox id="width" value="297.000" />
                <span className="w-[7px]" />
                <Override label="幅の上書き" />
              </div>
              <div className="flex items-center">
                <label htmlFor="height" className="w-6">高さ</label>
                <SpinBox id="height" value="210.000" />
                <span className="w-[7px]" />
                <Override label="高さの上書き" />
              </div>
            </div>
            <button type="button" aria-label="縦横比を固定" className="ml-3 h-9 w-[10px]">
              <svg viewBox="0 0 10 36" fill="none">
                <path d="M1 1.500h5.500V8M1 34.500h5.500V28" stroke="#c6c6c6" />
                <path d="M3 18v-3c0-3 5-3 5 0" stroke="#c6c6c6" />
                <path d="M1 18h8v6H1z" fill="#c2c2c2" />
              </svg>
            </button>
            <div className="relative ml-auto h-4 w-[45px] text-[#999]">
              <select aria-label="単位" disabled className="h-full w-full appearance-none rounded-xs border border-[#c9c9c9] bg-[#f5f5f5] pl-[3px]">
                <option>mm</option>
              </select>
              <span className="pointer-events-none absolute inset-y-0 right-[5px] flex items-center">
                <Caret />
              </span>
            </div>
          </div>
        </div>
        <div className="mt-[6px] flex h-4 items-center gap-1">
          <CheckBox id="exclude" />
          <label htmlFor="exclude" className="mr-px">ページをエクスポートから除外する</label>
          <Override label="除外の上書き" />
        </div>
        <div className="mt-[7px] flex items-center">
          <span className="w-[21px]">背景</span>
          <button type="button" aria-label="背景色" className="h-[17px] flex-1 rounded-xs border border-[#b5b5b5] bg-white" />
          <button type="button" aria-label="背景色メニュー" className="flex h-[17px] w-[9px] items-center justify-center rounded-xs border border-[#b5b5b5] bg-[#fafafa]">
            <Caret />
          </button>
        </div>
      </div>
    </div>
  </section>
);

const StatusBar = () => (
  <footer className="flex h-5 shrink-0 items-center justify-end pr-px text-[7px]">
    <span className="w-20">x: 268.08 mm</span>
    <span className="w-[79px]">y: 130.78 mm</span>
    <span className="w-[79px]">ページ: 1</span>
    <div className="relative h-[17px] w-[102px] rounded-xs border border-[#b3b3b3] bg-white">
      <select aria-label="ズーム" className="h-full w-full appearance-none pl-[2px] outline-none">
        <option>50.3%</option>
      </select>
      <span className="pointer-events-none absolute inset-y-0 right-0 flex w-[15px] items-center justify-center border-l border-[#d0d0d0] bg-[#f6f6f6]">
        <Caret />
      </span>
    </div>
    <input
      type="range"
      aria-label="ズーム倍率"
      min="0"
      max="100"
      defaultValue="3"
      className="ml-[6px] h-[3px] w-[74px] appearance-none rounded-full border border-[#bdbdbd] bg-linear-to-r from-[#4a90d9] from-3% to-[#dcdcdc] to-3% [&::-webkit-slider-thumb]:h-[9px] [&::-webkit-slider-thumb]:w-[10px] [&::-webkit-slider-thumb]:appearance-none [&::-webkit-slider-thumb]:rounded-xs [&::-webkit-slider-thumb]:border [&::-webkit-slider-thumb]:border-[#a8a8a8] [&::-webkit-slider-thumb]:bg-white"
    />
  </footer>
);

const App = () => {
  return (
    <div className="flex min-h-screen flex-col bg-[#f0f0f0] font-['Open_Sans','Noto_Sans_CJK_JP',sans-serif] leading-none text-[#333]">
      <TitleBar />
      <MenuBar />
      <LayoutToolbar />
      <ActionsToolbar />
      <div className="flex flex-1">
        <Toolbox />
        <div className="flex min-w-0 flex-1 flex-col">
          <HorizontalRuler />
          <div className="flex flex-1">
            <VerticalRuler />
            <Canvas />
          </div>
        </div>
        <aside className="ml-[5px] flex w-[298px] shrink-0 flex-col">
          <ItemsPanel />
          <span className="mx-auto my-[2px] h-px w-3 border-t border-dotted border-[#bbb]" />
          <PropertiesPanel />
        </aside>
      </div>
      <StatusBar />
    </div>
  );
};

export default App;
